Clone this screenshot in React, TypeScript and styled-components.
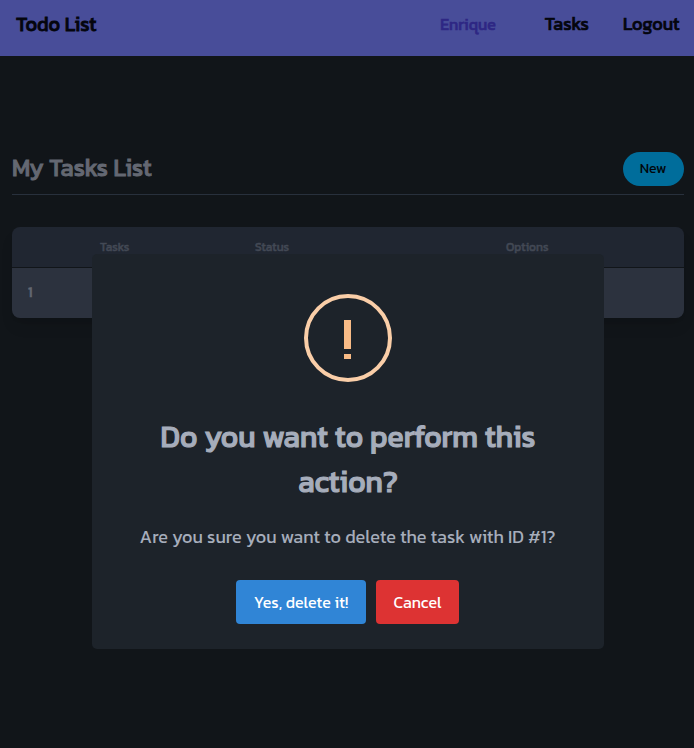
import React from "react";
import styled, { createGlobalStyle, css } from "styled-components";

const Global = createGlobalStyle`
  * { box-sizing: border-box; margin: 0; }
  body { background: #111519; font-family: Kanit, "Noto Sans", sans-serif; font-weight: 400; overflow: hidden; }
`;
const strong = css`
  font-weight: 400;
  -webkit-text-stroke: 0.04em currentColor;
`;
const Page = styled.div`
  height: 748px;
`;
const Bar = styled.header`
  height: 56px;
  background: #484d99;
  display: flex;
  align-items: flex-start;
  justify-content: space-between;
  padding: 8px 14.5px 0 16px;
  color: #04050d;
`;
const Brand = styled.h1`
  font-size: 20px;
  line-height: 32px;
  ${strong}
`;
const Nav = styled.nav`
  display: flex;
  align-items: center;
`;
const UserName = styled.span`
  font-size: 16px;
  line-height: 32px;
  color: #2e2784;
  margin-right: 49px;
  ${strong}
`;
const NavLink = styled.a`
  font-size: 18px;
  line-height: 32px;
  ${strong}
  & + & { margin-left: 34px; }
`;
const Main = styled.main`
  padding: 96px 10px 0 12px;
`;
const Heading = styled.div`
  height: 43px;
  display: flex;
  align-items: flex-start;
  justify-content: space-between;
  border-bottom: 1px solid #28303c;
`;
const Title = styled.h2`
  font-size: 24px;
  line-height: 32px;
  color: #646872;
  ${strong}
`;
const NewButton = styled.button`
  width: 61px;
  height: 34px;
  border: 0;
  border-radius: 17px;
  background: #006d9b;
  color: #00070c;
  font: 400 14px/34px Kanit, "Noto Sans", sans-serif;
  padding: 0 1px 0 0;
`;
const Table = styled.div`
  margin-top: 32px;
  border-radius: 8px;
  overflow: hidden;
  box-shadow: 0 10px 15px -3px rgba(0, 0, 0, 0.1), 0 4px 6px -4px rgba(0, 0, 0, 0.1);
`;
const Row = styled.div<{ $head?: boolean }>`
  display: grid;
  grid-template-columns: 72px 155px 251px 1fr;
  align-items: center;
  height: ${(p) => (p.$head ? 41 : 50)}px;
  padding: ${(p) => (p.$head ? "0 16px" : "0 16px 1px")};
  background: ${(p) => (p.$head ? "#202631" : "#2c323e")};
  border-bottom: ${(p) => (p.$head ? "1px solid #111519" : "0")};
  font-size: ${(p) => (p.$head ? 12 : 14)}px;
  color: ${(p) => (p.$head ? "#434955" : "#646872")};
  ${strong}
`;
const Dialog = styled.section`
  position: absolute;
  left: 92px;
  top: 254px;
  width: 512px;
  height: 395px;
  border-radius: 5px;
  background: #1d232a;
  color: #a6adbb;
  display: flex;
  flex-direction: column;
  align-items: center;
  padding-top: 40px;
  text-align: center;
`;
const WarningIcon = styled.svg`
  display: block;
  width: 88px;
  height: 88px;
`;
const Question = styled.h2`
  width: 440px;
  margin-top: 32px;
  font-size: 30px;
  line-height: 45px;
  ${strong}
`;
const Detail = styled.p`
  margin: 19px 1px 0 0;
  font-size: 18px;
  line-height: 27px;
`;
const Actions = styled.div`
  display: flex;
  gap: 10px;
  margin: 30px 1px 0 0;
`;
const Action = styled.button<{ $danger?: boolean }>`
  width: ${(p) => (p.$danger ? 83 : 130)}px;
  height: 44px;
  border: 0;
  border-radius: 4px;
  padding: 0;
  background: ${(p) => (p.$danger ? "#dd3333" : "#3085d6")};
  color: #fff;
  font: 400 16px/24px Kanit, "Noto Sans", sans-serif;
`;

export default function App() {
  return (
    <Page>
      <Global />
      <Bar>
        <Brand>Todo List</Brand>
        <Nav>
          <UserName>Enrique</UserName>
          <NavLink>Tasks</NavLink>
          <NavLink>Logout</NavLink>
        </Nav>
      </Bar>
      <Main>
        <Heading>
          <Title>My Tasks List</Title>
          <NewButton>New</NewButton>
        </Heading>
        <Table>
          <Row $head>
            <span />
            <span>Tasks</span>
            <span>Status</span>
            <span>Options</span>
          </Row>
          <Row>
            <span>1</span>
          </Row>
        </Table>
      </Main>
      <Dialog role="dialog">
        <WarningIcon viewBox="0 0 88 88">
          <circle cx="44" cy="44" r="42" fill="none" stroke="#facea8" strokeWidth="4" />
          <path d="M40 26h7v29h-7zM40 60h7v5h-7z" fill="#f8bb86" />
        </WarningIcon>
        <Question>Do you want to perform this action?</Question>
        <Detail>Are you sure you want to delete the task with ID #1?</Detail>
        <Actions>
          <Action>Yes, delete it!</Action>
          <Action $danger>Cancel</Action>
        </Actions>
      </Dialog>
    </Page>
  );
}
